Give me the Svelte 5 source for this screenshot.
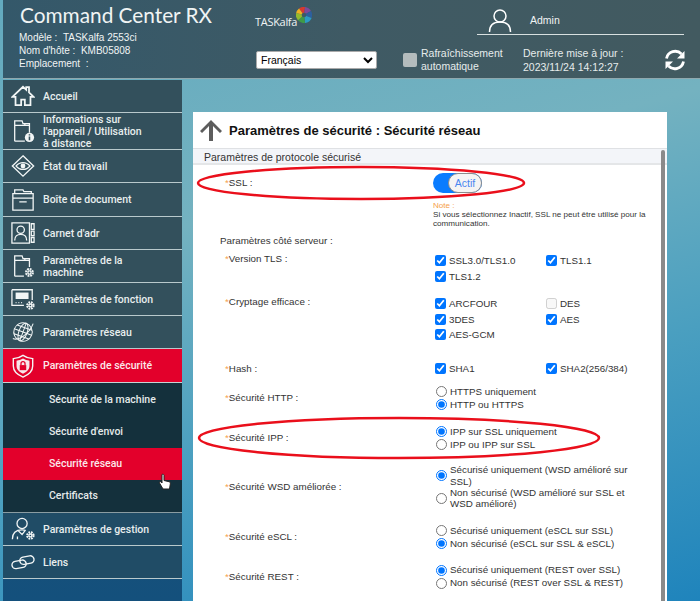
<script>
	const nav = [
		{ label: 'Accueil', icon: 'home', h: 33 },
		{ label: "Informations sur\nl'appareil / Utilisation\nà distance", icon: 'info', h: 37 },
		{ label: 'État du travail', icon: 'eye', h: 33 },
		{ label: 'Boîte de document', icon: 'box', h: 34 },
		{ label: "Carnet d'adr", icon: 'addr', h: 33 },
		{ label: 'Paramètres de la\nmachine', icon: 'machine', h: 33 },
		{ label: 'Paramètres de fonction', icon: 'func', h: 33 },
		{ label: 'Paramètres réseau', icon: 'net', h: 33 },
		{ label: 'Paramètres de sécurité', icon: 'shield', h: 34, active: true }
	];
	const sub = [
		{ label: 'Sécurité de la machine' },
		{ label: "Sécurité d'envoi" },
		{ label: 'Sécurité réseau', active: true },
		{ label: 'Certificats' }
	];
	const navEnd = [
		{ label: 'Paramètres de gestion', icon: 'admin', h: 33 },
		{ label: 'Liens', icon: 'link', h: 33 }
	];
	const checks = [
		{ label: 'Version TLS :', h: 43, items: [['SSL3.0/TLS1.0', true], ['TLS1.1', true], ['TLS1.2', true]] },
		{ label: 'Cryptage efficace :', h: 67, items: [['ARCFOUR', true], ['DES', false], ['3DES', true], ['AES', true], ['AES-GCM', true]] },
		{ label: 'Hash :', h: 16, flat: true, items: [['SHA1', true], ['SHA2(256/384)', true]] }
	];
	const radios = [
		{ label: 'Sécurité HTTP :', name: 'http', h: 40, checked: 1, items: ['HTTPS uniquement', 'HTTP ou HTTPS'] },
		{ label: 'Sécurité IPP :', name: 'ipp', h: 40, checked: 0, items: ['IPP sur SSL uniquement', 'IPP ou IPP sur SSL'] },
		{ label: 'Sécurité WSD améliorée :', name: 'wsd', h: 58, checked: 0, items: ['Sécurisé uniquement (WSD amélioré sur SSL)', 'Non sécurisé (WSD amélioré sur SSL et WSD amélioré)'] },
		{ label: 'Sécurité eSCL :', name: 'escl', h: 42, checked: 1, items: ['Sécurisé uniquement (eSCL sur SSL)', 'Non sécurisé (eSCL sur SSL & eSCL)'] },
		{ label: 'Sécurité REST :', name: 'rest', h: 37, checked: 0, items: ['Sécurisé uniquement (REST over SSL)', 'Non sécurisé (REST over SSL & REST)'] }
	];
</script>

{#snippet icon(name)}
	<svg class="icon" viewBox="0 0 26 26" fill="none" stroke="#f2f6f6" stroke-width="1.4">
		{#if name === 'home'}
			<path d="M1.500 14 13 3l3.500 3.300V3.500h3v5.600L24.500 14h-3.400v9H15v-6h-4v6H4.900v-9z" stroke-width="1.900" />
		{:else if name === 'info'}
			<path d="M4 24V2h8l1 3h7v10M4 7h16M15 5v2M4 24h11" />
			<circle cx="20" cy="20" r="5" fill="#f2f6f6" stroke="none" />
			<path d="M20 19v4M20 16.500v1.300" stroke="#33505c" stroke-width="1.700" />
		{:else if name === 'eye'}
			<path d="M13 2 24.500 13 13 24 1.500 13z" stroke-width="1.500" />
			<path d="M5.500 13c4-5 11-5 15 0-4 5-11 5-15 0z" />
			<circle cx="13" cy="13" r="2.600" fill="#f2f6f6" stroke="none" />
		{:else if name === 'box'}
			<path d="M2 24V6h22v18zM4 6V2h9l1 2h8v2M2 11h22M9 15h8" />
		{:else if name === 'addr'}
			<path d="M1 2h19v22H1zM22 3h3v6h-3zM22 11h3v5h-3zM22 18h3v5h-3z" />
			<circle cx="10.500" cy="9.500" r="4" />
			<path d="M4 21c0-4.500 3-6.500 6.500-6.500S17 16.500 17 21" />
		{:else if name === 'machine'}
			<path d="M4 24V2h8l1 3h7v9M4 7h16M15 5v2M4 24h10" />
			<circle cx="20" cy="20" r="3.600" stroke-width="2.400" stroke-dasharray="1.900 .9" />
			<circle cx="20" cy="20" r="1.700" />
		{:else if name === 'func'}
			<path d="M1 3h22v11M1 3v17h13M5 17h1M8 17h1M11 17h1" />
			<rect x="5" y="6" width="14" height="7" fill="#f2f6f6" stroke="none" />
			<circle cx="21" cy="20" r="3.400" stroke-width="2.400" stroke-dasharray="1.800 .9" />
			<circle cx="21" cy="20" r="1.600" />
		{:else if name === 'net'}
			<g transform="rotate(20 13 13)">
				<circle cx="13" cy="13" r="10" stroke-width="1.100" />
				<ellipse cx="13" cy="13" rx="4.500" ry="10" stroke-width="1.100" />
				<path d="M3 13h20M4.500 8h17M4.500 18h17M13 3v20" stroke-width="1.100" />
			</g>
			<path d="M2 20C8 23 20 15 24 4" stroke-width="1.100" />
		{:else if name === 'shield'}
			<path d="M13 1.500c3 2.200 6.500 3.200 10.500 3.500v8c0 5.500-4.500 9.500-10.500 12C7 22.500 2.500 18.500 2.500 13V5C6.500 4.700 10 3.700 13 1.500z" stroke-width="1.500" />
			<path d="M13 5c2.200 1.300 4.500 2 7 2.300V13c0 3.800-3 6.500-7 8.500-4-2-7-4.700-7-8.500V7.300C8.500 7 10.800 6.300 13 5z" fill="#f8e6ea" stroke="none" />
			<rect x="9.500" y="12" width="7" height="5.500" fill="#e3002b" stroke="none" />
			<path d="M10.800 12V10.500a2.200 2.200 0 0 1 4.400 0V12" stroke="#e3002b" />
		{:else if name === 'admin'}
			<circle cx="12" cy="7" r="5.500" />
			<path d="M1.500 24c0-6 3.500-10 10.500-10 1.500 0 3 .300 4 .800M8 15l4 4 3-4M7 24v-3" />
			<circle cx="21" cy="20" r="3.400" stroke-width="2.400" stroke-dasharray="1.800 .9" />
			<circle cx="21" cy="20" r="1.600" />
		{:else if name === 'link'}
			<rect x="1" y="11.500" width="15.500" height="8" rx="4" transform="rotate(-10 9 15.500)" stroke-width="1.500" />
			<rect x="9.500" y="7" width="15.500" height="8" rx="4" transform="rotate(-10 17 11)" stroke-width="1.500" />
		{/if}
	</svg>
{/snippet}

{#snippet navItem(item)}
	<a class="nav-item" class:active={item.active} style="height: {item.h}px">
		{@render icon(item.icon)}
		<span class="nav-label">{item.label}</span>
	</a>
{/snippet}

<div class="page">
	<header class="top">
		<div class="brand">
			<div class="product">Command Center RX</div>
			<div class="meta">Modèle : &nbsp;TASKalfa 2553ci</div>
			<div class="meta">Nom d'hôte : &nbsp;KMB05808</div>
			<div class="meta">Emplacement &nbsp;:</div>
		</div>
		<div class="lang">
			<div class="logo">
				<span>TASKalfa</span>
				<svg width="16" height="16" viewBox="0 0 16 16">
					<path d="M8 8 3 1.500A8 8 0 0 1 9 0z" fill="#d9392d" />
					<path d="M8 8 9 0a8 8 0 0 1 6 4z" fill="#7d4a9a" />
					<path d="M8 8 15 4a8 8 0 0 1 .600 7z" fill="#2d5f9e" />
					<path d="M8 8l7.600 3A8 8 0 0 1 9 16z" fill="#2c9bc4" />
					<path d="M8 8 9 16A8 8 0 0 1 2 13.300z" fill="#3f9b45" />
					<path d="M8 8 2 13.300A8 8 0 0 1 .200 6z" fill="#93b92e" />
					<path d="M8 8 .200 6A8 8 0 0 1 3 1.500z" fill="#eeb121" />
					<circle cx="8" cy="8" r="2.300" fill="#3f5a64" />
				</svg>
			</div>
			<select class="lang-select">
				<option>Français</option>
			</select>
		</div>
		<div class="status">
			<div class="user">
				<svg width="24" height="24" viewBox="0 0 24 24" fill="none" stroke="#fff" stroke-width="1.500">
					<circle cx="12" cy="8" r="6" />
					<path d="M1.500 24c0-6.500 4-10 10.500-10s10.500 3.500 10.500 10" />
				</svg>
				<span>Admin</span>
			</div>
			<div class="refresh-row">
				<span class="auto-box"></span>
				<span class="auto-label">Rafraîchissement<br />automatique</span>
				<span class="updated">Dernière mise à jour :<br />2023/11/24 14:12:27</span>
				<svg width="24" height="24" viewBox="0 0 24 24" fill="none" stroke="#fff" stroke-width="2.800">
					<path d="M3.500 10.500A8.800 8.800 0 0 1 18.500 6" />
					<path d="M20.500 13.500A8.800 8.800 0 0 1 5.500 18" />
					<path d="M21.500 3v7.500h-7.500L21.500 3zM2.500 21v-7.500H10L2.500 21z" fill="#fff" stroke="none" />
				</svg>
			</div>
		</div>
	</header>

	<div class="body">
		<nav class="side">
			{#each nav as item}
				{@render navItem(item)}
			{/each}
			<div class="sub">
				{#each sub as s}
					<a class="sub-item" class:active={s.active}>{s.label}</a>
				{/each}
			</div>
			{#each navEnd as item}
				{@render navItem(item)}
			{/each}
		</nav>

		<main class="panel">
			<div class="title">
				<svg width="22" height="22" viewBox="0 0 22 22" fill="#5d5d5d">
					<path d="M11 1 22 12l-2 2-7-7v15H9V7l-7 7-2-2z" />
				</svg>
				<h1>Paramètres de sécurité : Sécurité réseau</h1>
			</div>
			<div class="section">Paramètres de protocole sécurisé</div>
			<div class="scroll-thumb"></div>
			<div class="form">
				<div class="row ssl">
					<div class="label"><i>*</i>SSL :</div>
					<div class="toggle"><span>Actif</span></div>
				</div>
				<div class="note">
					<em>Note :</em>
					Si vous sélectionnez Inactif, SSL ne peut être utilisé pour la communication.
				</div>
				<div class="subhead">Paramètres côté serveur :</div>
				{#each checks as group}
					<div class="row" style="height: {group.h}px">
						<div class="label"><i>*</i>{group.label}</div>
						<div class="checks" class:flat={group.flat}>
							{#each group.items as [text, on]}
								<label class="check"><input type="checkbox" checked={on} disabled={!on} />{text}</label>
							{/each}
						</div>
					</div>
				{/each}
				{#each radios as group}
					<div class="row mid" style="height: {group.h}px">
						<div class="label"><i>*</i>{group.label}</div>
						<div class="radios">
							{#each group.items as text, i}
								<label class="radio"><input type="radio" name={group.name} checked={i === group.checked} /><span>{text}</span></label>
							{/each}
						</div>
					</div>
				{/each}
			</div>
		</main>
	</div>

	<svg class="marks" width="700" height="601" fill="none" stroke="#ea0f1b" stroke-width="2.500">
		<ellipse cx="361" cy="183" rx="163" ry="16" />
		<ellipse cx="399" cy="438" rx="200" ry="20" />
	</svg>
	<svg class="cursor" width="14" height="18" viewBox="0 0 14 18">
		<path d="M4 1.500c1-.6 2 0 2 1v5l5 1.200c1.200.4 1.500 1 1.300 2.300L11.500 16H5L1.500 10c-.5-1 .8-1.800 1.700-1L4 10z" fill="#fff" stroke="#222" />
	</svg>
</div>

<style>
	:global(body) {
		margin: 0;
	}
	.page {
		position: relative;
		width: 700px;
		height: 601px;
		overflow: hidden;
		padding-left: 3px;
		box-sizing: border-box;
		font-family: Roboto, sans-serif;
		background: linear-gradient(165deg, #63aabf 0%, #74b2c0 35%, #4a9fc0 65%, #1f84bc 100%);
	}
	.top {
		display: flex;
		height: 79px;
		box-sizing: border-box;
		color: #f0f4f4;
		background: linear-gradient(90deg, #34586a 0%, #3f5a64 50%, #425a60 100%);
		border-bottom: 1px solid #8fa8ae;
	}
	.brand {
		width: 250px;
		padding: 2px 0 0 17px;
		box-sizing: border-box;
	}
	.product {
		font-family: Lato, sans-serif;
		font-size: 20.800px;
		line-height: 26px;
		margin-bottom: 3px;
		white-space: nowrap;
	}
	.meta {
		font-family: "Liberation Sans", sans-serif;
		font-size: 10px;
		line-height: 13px;
		white-space: nowrap;
		margin-left: -1px;
	}
	.lang {
		width: 145px;
		padding-left: 2px;
		box-sizing: border-box;
	}
	.logo {
		display: flex;
		align-items: flex-start;
		height: 30px;
		margin-top: 7px;
		margin-bottom: 14px;
		font-family: "Open Sans", sans-serif;
		font-size: 11px;
	}
	.logo span {
		margin-top: 7px;
		letter-spacing: -0.300px;
	}
	.logo svg {
		margin-left: -1px;
	}
	.lang-select {
		display: block;
		width: 121px;
		height: 18px;
		margin-left: 1px;
		padding: 0;
		font-family: "Liberation Sans", sans-serif;
		font-size: 10.500px;
		background: #fff;
		border: 1px solid #aaa;
		border-radius: 2px;
	}
	.status {
		flex: 1;
		padding-top: 6px;
	}
	.user {
		display: flex;
		align-items: center;
		gap: 18px;
		width: 207px;
		height: 29px;
		margin-left: 79px;
		padding: 0 0 0 11px;
		box-sizing: border-box;
		border-bottom: 1px solid #d8e0e0;
		font-family: "Liberation Sans", sans-serif;
		font-size: 10.500px;
	}
	.refresh-row {
		display: flex;
		align-items: center;
		margin: 11px 0 0 5px;
		font-family: "Liberation Sans", sans-serif;
		font-size: 10.500px;
		line-height: 13.500px;
		white-space: nowrap;
		color: #e6ecec;
	}
	.auto-box {
		width: 14px;
		height: 14px;
		border-radius: 2px;
		background: #b4bcbd;
		margin-right: 4px;
	}
	.auto-label {
		width: 102px;
	}
	.updated {
		width: 140px;
		line-height: 14px;
	}
	.body {
		display: flex;
		align-items: flex-start;
		padding-top: 1px;
	}
	.side {
		display: flex;
		flex-direction: column;
		width: 179px;
		height: 521px;
		flex-shrink: 0;
		background: linear-gradient(180deg, #1f4f6c 0%, #14507c 100%);
	}
	.nav-item {
		display: flex;
		align-items: center;
		box-sizing: border-box;
		padding-left: 8px;
		background: #33505c;
		border-bottom: 1px solid #b9c9cc;
		color: #e8eeee;
		font-size: 10.500px;
		font-weight: 500;
		line-height: 12.300px;
	}
	.nav-item.active {
		background: #e3002b;
		border-bottom-color: #c9d2d4;
		color: #fbe8ea;
	}
	.nav-item:nth-last-child(-n + 2) {
		background: #204c66;
	}
	.icon {
		width: 24px;
		height: 24px;
		flex-shrink: 0;
		margin-right: 8px;
	}
	.nav-label {
		white-space: pre-line;
		padding-top: 2px;
	}
	.sub {
		background: #14303c;
		border-bottom: 1px solid #8a9ca2;
	}
	.sub-item {
		display: flex;
		align-items: center;
		height: 32.250px;
		padding-left: 46px;
		color: #e4eaea;
		font-size: 10.500px;
		font-weight: 500;
	}
	.sub-item.active {
		background: #e3002b;
		color: #fbe8ea;
	}
	.panel {
		position: relative;
		width: 474px;
		margin: 32px 0 0 11px;
		height: 489px;
		background: #fff;
		font-family: "Liberation Sans", sans-serif;
		color: #333;
		overflow: hidden;
	}
	.title {
		display: flex;
		align-items: center;
		gap: 7px;
		height: 36px;
		padding-left: 7px;
		box-sizing: border-box;
	}
	.title h1 {
		margin: 0;
		font-size: 13px;
		font-weight: 700;
		color: #111;
		white-space: nowrap;
	}
	.section {
		height: 17px;
		line-height: 16px;
		padding-left: 11px;
		box-sizing: border-box;
		font-size: 10.500px;
		background: #f3f5f9;
		border-top: 1px solid #dfe1e4;
		border-bottom: 2px solid #e4e6e8;
	}
	.scroll-thumb {
		position: absolute;
		top: 38px;
		right: 2px;
		width: 4px;
		height: 100%;
		background: #8a8a8a;
		border-radius: 2px;
	}
	.form {
		padding: 0 0 0 27px;
		font-size: 9.800px;
	}
	.row {
		display: flex;
		align-items: flex-start;
	}
	.row.mid {
		align-items: center;
	}
	.label {
		width: 207px;
		flex-shrink: 0;
		margin-left: 5px;
		line-height: 14px;
	}
	.label i {
		font-style: normal;
		color: #f5a04a;
	}
	.ssl {
		height: 36px;
		align-items: center;
	}
	.toggle {
		display: flex;
		justify-content: flex-end;
		width: 49px;
		height: 20px;
		margin-left: 1px;
		border-radius: 10px;
		background: #0a7cff;
	}
	.toggle span {
		width: 34px;
		box-sizing: border-box;
		border: 1px solid #8c8c8c;
		border-radius: 10px;
		background: #f4f4f4;
		color: #4a86f0;
		font-size: 10.500px;
		line-height: 18px;
		text-align: center;
	}
	.note {
		margin: 0 0 0 213px;
		height: 33px;
		font-size: 8.100px;
		line-height: 9px;
		width: 232px;
	}
	.note em {
		display: block;
		font-style: normal;
		color: #f5a04a;
	}
	.subhead {
		height: 18px;
		line-height: 14px;
	}
	.checks {
		display: grid;
		grid-template-columns: 111px 1fr;
		grid-auto-rows: 15.500px;
		padding-top: 1px;
		margin-left: 3px;
	}
	.checks.flat {
		padding-top: 0;
		margin-top: -1px;
	}
	.check {
		display: flex;
		align-items: center;
		white-space: nowrap;
	}
	.check input {
		width: 11px;
		height: 11px;
		margin: 0 3px 0 0;
		accent-color: #0075ff;
	}
	.radios {
		margin-left: 3px;
		width: 198px;
	}
	.radio {
		display: flex;
		align-items: center;
		min-height: 13px;
		line-height: 11.300px;
	}
	.radio input {
		width: 11px;
		height: 11px;
		margin: 0 3px 0 1px;
		flex-shrink: 0;
		accent-color: #0075ff;
	}
	.marks {
		position: absolute;
		top: 0;
		left: 0;
		pointer-events: none;
	}
	.cursor {
		position: absolute;
		left: 158px;
		top: 473px;
	}
</style>
